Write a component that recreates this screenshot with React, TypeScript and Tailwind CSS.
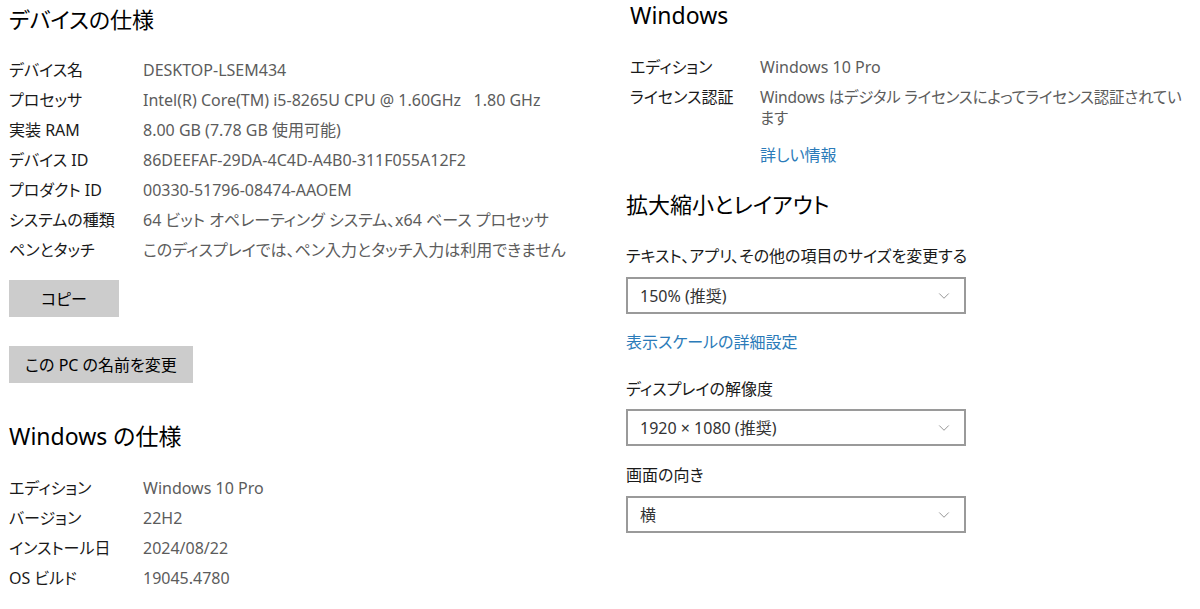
import { FiChevronDown } from "react-icons/fi";

const font = {
  fontFamily: '"Noto Sans", "Noto Sans CJK JP", sans-serif',
  fontFeatureSettings: '"palt"',
};

const deviceSpecs = [
  ["デバイス名", "DESKTOP-LSEM434"],
  ["プロセッサ", "Intel(R) Core(TM) i5-8265U CPU @ 1.60GHz\u00a0\u00a0\u00a01.80 GHz"],
  ["実装 RAM", "8.00 GB (7.78 GB 使用可能)"],
  ["デバイス ID", "86DEEFAF-29DA-4C4D-A4B0-311F055A12F2"],
  ["プロダクト ID", "00330-51796-08474-AAOEM"],
  ["システムの種類", "64 ビット オペレーティング システム、x64 ベース プロセッサ"],
  ["ペンとタッチ", "このディスプレイでは、ペン入力とタッチ入力は利用できません"],
];

const winSpecs = [
  ["エディション", "Windows 10 Pro"],
  ["バージョン", "22H2"],
  ["インストール日", "2024/08/22"],
  ["OS ビルド", "19045.4780"],
];

function SpecRow({ label, value }: { label: string; value: string }) {
  return (
    <div className="flex h-[30px] items-center text-[16px]">
      <div className="w-[134px] shrink-0 text-[#1a1a1a]">{label}</div>
      <div className="whitespace-nowrap text-[#5c5c5c]">{value}</div>
    </div>
  );
}

function Dropdown({ value }: { value: string }) {
  return (
    <div className="flex h-[37px] w-[340px] items-center justify-between border-2 border-[#9a9a9a] bg-white pl-[12px] pr-[11px] text-[16px] text-[#333]">
      <span>{value}</span>
      <FiChevronDown className="text-[18px] text-[#8a8a8a]" strokeWidth={1.2} />
    </div>
  );
}

export default function App() {
  return (
    <div className="flex h-[609px] w-[1200px] overflow-hidden bg-white" style={font}>
      {/* left column */}
      <div className="w-[626px] shrink-0 pl-[9px]">
        <h1 className="flex h-[38px] items-center text-[22px] text-black">デバイスの仕様</h1>
        <div className="mt-[17px]">
          {deviceSpecs.map(([l, v]) => (
            <SpecRow key={l} label={l} value={v} />
          ))}
        </div>
        <button className="mt-[15px] block h-[37px] w-[110px] bg-[#cccccc] text-[16px] text-black">コピー</button>
        <button className="mt-[29px] block h-[37px] w-[184px] bg-[#cccccc] text-[16px] text-black">この PC の名前を変更</button>
        <h2 className="mt-[34px] flex h-[38px] items-center text-[23px] text-black">Windows の仕様</h2>
        <div className="mt-[18px]">
          {winSpecs.map(([l, v]) => (
            <SpecRow key={l} label={l} value={v} />
          ))}
        </div>
      </div>

      {/* right column */}
      <div className="w-[574px]">
        <div className="pl-[4px]">
          <h2 className="flex h-[30px] items-center text-[23px] text-black">Windows</h2>
          <div className="mt-[22px] text-[16px]">
            <div className="flex h-[30px] items-center">
              <div className="w-[130px] shrink-0 text-[#1a1a1a]">エディション</div>
              <div className="text-[#5c5c5c]">Windows 10 Pro</div>
            </div>
            <div className="flex py-[4.5px] leading-[21px]">
              <div className="w-[130px] shrink-0 text-[#1a1a1a]">ライセンス認証</div>
              <div className="whitespace-nowrap text-[15.5px] tracking-[-0.2px] text-[#5c5c5c]">
                Windows はデジタル ライセンスによってライセンス認証されてい
                <br />
                ます
              </div>
            </div>
            <div className="mt-[12px] pl-[130px] leading-[21px] text-[#2b7bb9]">詳しい情報</div>
          </div>
        </div>

        <h2 className="mt-[19px] flex h-[38px] items-center text-[22px] text-black">拡大縮小とレイアウト</h2>
        <div className="mt-[22.5px] text-[16px] leading-[21px] text-[#1a1a1a]">テキスト、アプリ、その他の項目のサイズを変更する</div>
        <div className="mt-[10.5px]">
          <Dropdown value="150% (推奨)" />
        </div>
        <div className="mt-[17.5px] text-[16px] leading-[21px] text-[#2b7bb9]">表示スケールの詳細設定</div>
        <div className="mt-[26px] text-[16px] leading-[21px] text-[#1a1a1a]">ディスプレイの解像度</div>
        <div className="mt-[9.5px]">
          <Dropdown value="1920 × 1080 (推奨)" />
        </div>
        <div className="mt-[18.5px] text-[16px] leading-[21px] text-[#1a1a1a]">画面の向き</div>
        <div className="mt-[10.5px]">
          <Dropdown value="横" />
        </div>
      </div>
    </div>
  );
}
